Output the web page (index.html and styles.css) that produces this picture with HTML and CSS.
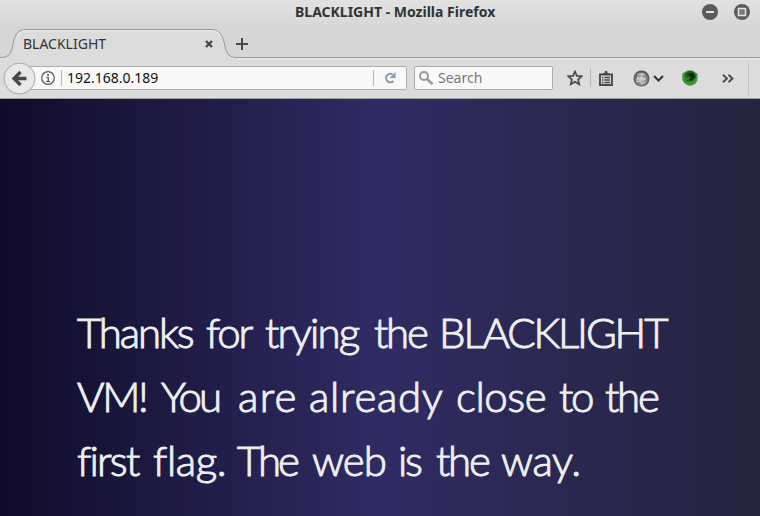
FILE: index.html
```
<!DOCTYPE html>
<html lang="en">
<head>
<meta charset="utf-8">
<title>BLACKLIGHT</title>
<link rel="stylesheet" href="styles.css">
</head>
<body>
<div class="window">
  <header class="chrome">
    <div class="titlebar">
      <span class="window-title">BLACKLIGHT - Mozilla Firefox</span>
      <div class="window-buttons">
        <svg width="16" height="16" viewBox="0 0 16 16"><circle cx="8" cy="8" r="8" fill="#5b5b5b"/><path d="M4 8h8" stroke="#e4e4e4" stroke-width="2"/></svg>
        <svg width="16" height="16" viewBox="0 0 16 16"><circle cx="8" cy="8" r="8" fill="#5b5b5b"/><path d="M4.500 4.500h7v7h-7z" fill="#777" stroke="#e4e4e4" stroke-width="1.500"/></svg>
      </div>
    </div>
    <div class="tabs">
      <svg class="tab-shape" width="760" height="31" viewBox="0 0 760 31"><path d="M0 29.500C8 29.500 10.500 27 12.500 19C14.500 6 18 1.500 26 1.500H211C219 1.500 222.500 6 225 18C227 27 229.500 29.500 238 29.500H760V31H0Z" fill="#dcdcdc"/><path d="M0 29.500C8 29.500 10.500 27 12.500 19C14.500 6 18 1.500 26 1.500H211C219 1.500 222.500 6 225 18C227 27 229.500 29.500 238 29.500H760" fill="none" stroke="#92979a"/><path d="M17 9C19 4 22 2.500 27 2.500H211C216 2.500 219 4.500 221 9M238 30.500H760" fill="none" stroke="#eee"/></svg>
      <span class="tab-label">BLACKLIGHT</span>
      <svg class="tab-close" width="8" height="8" viewBox="0 0 8 8"><path d="M1 1l6 6M7 1L1 7" stroke="#484848" stroke-width="2.400"/></svg>
      <svg class="tab-new" width="12" height="12" viewBox="0 0 12 12"><path d="M6 0v12M0 6h12" stroke="#484848" stroke-width="2"/></svg>
    </div>
    <div class="toolbar">
      <svg class="back" width="33" height="33" viewBox="0 0 33 33"><circle cx="16.500" cy="16.500" r="15.500" fill="#e8e8e8" stroke="#a7a7a7"/><path d="M17.500 10L11 16.500L17.500 23M11.500 16.500H23.500" fill="none" stroke="#484848" stroke-width="3.300"/></svg>
      <div class="urlbar">
        <svg width="14" height="14" viewBox="0 0 14 14"><circle cx="7" cy="7" r="6.300" fill="none" stroke="#555" stroke-width="1.200"/><path d="M5.500 6.500H7.200V10.500M5.300 10.500H9" fill="none" stroke="#444" stroke-width="1.200"/><circle cx="7" cy="4" r="1" fill="#444"/></svg>
        <i class="rule info-rule"></i>
        <span class="address">192.168.0.189</span>
        <i class="rule reload-rule"></i>
        <svg class="reload" width="12" height="12" viewBox="0 0 12 12"><path d="M8.500 2.300A4.300 4.300 0 1 0 9.500 9" fill="none" stroke="#8999a8" stroke-width="2"/><path d="M11.500 0V6H5.500Z" fill="#8999a8"/></svg>
      </div>
      <div class="search">
        <svg width="14" height="14" viewBox="0 0 14 14"><circle cx="5" cy="5" r="4" fill="none" stroke="#999" stroke-width="2"/><path d="M8 8l5.500 5" stroke="#999" stroke-width="2.500"/></svg>
        <span class="placeholder">Search</span>
      </div>
      <svg class="star" width="16" height="16" viewBox="0 0 16 16"><path d="M8 1.500L9.900 5.900L14.700 6.300L11.100 9.500L12.200 14.300L8 11.800L3.800 14.300L4.900 9.500L1.300 6.300L6.100 5.900Z" fill="none" stroke="#484848" stroke-width="1.700"/></svg>
      <i class="rule star-rule"></i>
      <svg class="list" width="14" height="15" viewBox="0 0 14 15"><path d="M1 3.500H13V14H1Z" fill="none" stroke="#484848" stroke-width="1.900"/><path d="M4 4V2H5.500L6 0H8L8.500 2H10V4Z" fill="#484848"/><path d="M3 6.500h1.500M3 9h1.500M3 11.500h1.500M5.500 6.500H11M5.500 9H11M5.500 11.500H11" stroke="#484848" stroke-width="1.300"/></svg>
      <svg class="globe" width="17" height="17" viewBox="0 0 17 17"><defs><radialGradient id="silver" cx=".5" cy=".55" r=".5"><stop stop-color="#bbb"/><stop offset=".6" stop-color="#909090"/><stop offset="1" stop-color="#505050"/></radialGradient></defs><circle cx="8.500" cy="8.500" r="8" fill="url(#silver)"/><path d="M4 5C6 2 10 2 13 5Z" fill="#ddd" opacity=".6"/><path d="M4 10l1-3 2 3 2-4 1 4 3-2M3 12l4-1 2 3 3-2" fill="none" stroke="#e4e4e4" stroke-width="1.200" opacity=".7"/></svg>
      <svg class="chevron" width="11" height="7" viewBox="0 0 11 7"><path d="M1 1l4.500 4.500L10 1" fill="none" stroke="#333" stroke-width="2"/></svg>
      <svg class="addon" width="16" height="16" viewBox="0 0 16 16"><path d="M.3 3.500L3 2C6-.5 11-.2 13.300 2.500L15.500 3.500V9C15 13 12 15.500 8 15.700C4 15.500 .8 12 .3 9Z" fill="#3f963c"/><circle cx="8.300" cy="6.800" r="5.700" fill="#1f5e20"/><path d="M5 4L11 2.500L13 7L10 11L6 9L9 7Z" fill="#102e12"/><path d="M2 6C3 9 5 10 8 8M3 11C7 13 12 12 14 8" fill="none" stroke="#3b8b34" stroke-width="1.500"/></svg>
      <svg class="more" width="12" height="9" viewBox="0 0 12 9"><path d="M1 .7L5 4.500L1 8.300M6.500 .7L10.500 4.500L6.500 8.300" fill="none" stroke="#484848" stroke-width="1.900"/></svg>
      <i class="rule end-rule"></i>
    </div>
  </header>
  <main class="page">
    <h1 class="message">
      <span class="line one"><span class="tight">Thanks</span> <span class="tight">for</span> <span class="snug">trying</span> <span class="tighter">the</span> <span class="tight">BLACKLIGHT</span></span>
      <span class="line two"><span class="tighter">VM!</span> <span class="tightest">You</span> <span class="loose">are</span> <span class="open">already</span> <span class="near">close</span> <span class="tighter">to</span> <span class="tighter">the</span></span>
      <span class="line three"><span class="snug">first</span> <span class="near">flag.</span> <span class="tightest">The</span> <span class="close">web</span> <span class="tighter">is</span> <span class="tighter">the</span> <span class="near">way.</span></span>
    </h1>
  </main>
</div>
</body>
</html>
```
FILE: styles.css
```
* { box-sizing: border-box; }
body { margin: 0; overflow: hidden; font-family: "Noto Sans", sans-serif; }
svg { display: block; flex: none; }
.window { width: 760px; height: 516px; display: flex; flex-direction: column; }
.chrome { height: 99px; background: linear-gradient(#e2e2e2, #d6d6d6 28px, #d6d6d6 58px, #dcdcdc 58px); border-bottom: 1px solid #a0a0a0; }
.titlebar { height: 28px; display: grid; grid-template-columns: 295px 1fr auto; padding-right: 10px; }
.window-title { grid-column: 2; font-size: 14px; font-weight: 700; line-height: 24px; color: #2e3436; white-space: nowrap; }
.window-buttons { display: flex; gap: 16px; padding-top: 4px; }
.tabs { height: 31px; display: flex; align-items: center; position: relative; padding-left: 23px; }
.tab-shape { position: absolute; left: 0; top: 0; }
.tab-label { position: relative; width: 182px; font-size: 14px; color: #333; }
.tab-close { position: relative; }
.tab-new { position: relative; margin-left: 23px; }
.toolbar { height: 38px; display: flex; align-items: center; padding-left: 3px; }
.back { position: relative; z-index: 1; margin-left: -.5px; }
.urlbar { width: 383px; height: 24px; margin-left: -11.5px; padding-left: 16px; display: flex; align-items: center; background: #f8f8f8; border: 1px solid #acacac; border-radius: 2px; }
.rule { flex: none; width: 1px; background: #b5b5b5; }
.info-rule { height: 16px; margin: 0 5px 0 6px; }
.address { width: 306px; padding-bottom: 2px; font-size: 14px; color: #111; }
.reload-rule { height: 16px; margin-right: 10px; }
.search { width: 139px; height: 24px; margin-left: 7px; padding-left: 4px; display: flex; align-items: center; gap: 5px; background: #f8f8f8; border: 1px solid #acacac; border-radius: 2px; font-size: 14px; color: #777; }
.placeholder { padding-bottom: 2px; }
.star { margin-left: 14px; }
.star-rule { height: 18px; margin: 0 8px 0 7px; }
.list { margin-right: 20px; }
.chevron { margin-left: 3px; }
.addon { margin-left: 18px; }
.more { margin-left: 24px; }
.end-rule { height: 34px; margin-left: 14px; background: #c5c5c5; }
.page { flex: 1; padding: 201px 0 0 77px; background: linear-gradient(to right, #0f0c29, #302b63, #24243e); }
.message { margin: 0; font: 300 42px/64px Lato, sans-serif; color: #ecf0f1; -webkit-text-stroke: 1px #ecf0f1; }
.line { display: grid; white-space: nowrap; }
.one { grid-template-columns: 129px 59px 109px 65px 1fr; }
.two { grid-template-columns: 84px 77px 71px 147px 103px 46px 1fr; }
.three { grid-template-columns: 76px 84px 75px 86px 38px 65px 1fr; }
.tightest { letter-spacing: -3px; }
.tighter { letter-spacing: -2.3px; }
.tight { letter-spacing: -2.150px; }
.snug { letter-spacing: -1.8px; }
.close { letter-spacing: -1px; }
.near { letter-spacing: -.4px; }
.open { letter-spacing: .7px; }
.loose { letter-spacing: 1.3px; }
```
